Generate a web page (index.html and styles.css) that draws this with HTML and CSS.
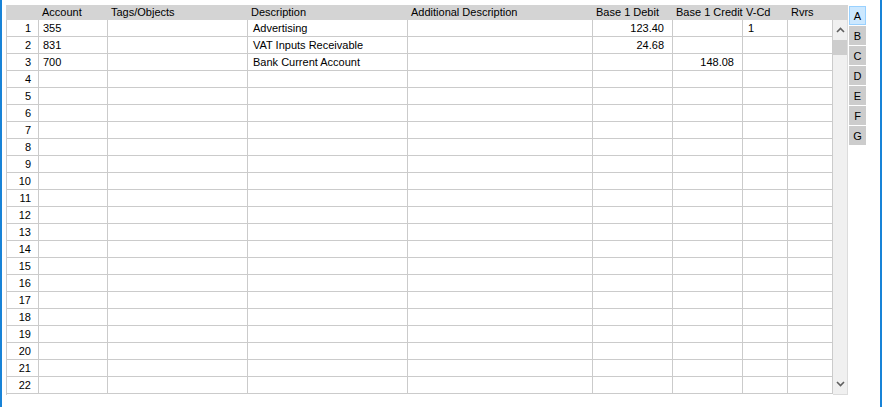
FILE: index.html
```html
<!DOCTYPE html>
<html>
<head>
<meta charset="utf-8">
<link rel="stylesheet" href="styles.css">
</head>
<body>
<div class="frame">
  <div class="table-area">
    <div class="header">
      <div class="hc"></div>
      <div class="hc">Account</div>
      <div class="hc">Tags/Objects</div>
      <div class="hc">Description</div>
      <div class="hc">Additional Description</div>
      <div class="hc">Base 1 Debit</div>
      <div class="hc">Base 1 Credit</div>
      <div class="hc">V-Cd</div>
      <div class="hc">Rvrs</div>
    </div>
    <div class="body">
      <div class="grid">
        <div class="row"><div class="c num">1</div><div class="c">355</div><div class="c"></div><div class="c desc">Advertising</div><div class="c"></div><div class="c amt">123.40</div><div class="c amt"></div><div class="c vcd">1</div><div class="c"></div></div>
        <div class="row"><div class="c num">2</div><div class="c">831</div><div class="c"></div><div class="c desc">VAT Inputs Receivable</div><div class="c"></div><div class="c amt">24.68</div><div class="c amt"></div><div class="c vcd"></div><div class="c"></div></div>
        <div class="row"><div class="c num">3</div><div class="c">700</div><div class="c"></div><div class="c desc">Bank Current Account</div><div class="c"></div><div class="c amt"></div><div class="c amt">148.08</div><div class="c vcd"></div><div class="c"></div></div>
        <div class="row"><div class="c num">4</div><div class="c"></div><div class="c"></div><div class="c"></div><div class="c"></div><div class="c"></div><div class="c"></div><div class="c"></div><div class="c"></div></div>
        <div class="row"><div class="c num">5</div><div class="c"></div><div class="c"></div><div class="c"></div><div class="c"></div><div class="c"></div><div class="c"></div><div class="c"></div><div class="c"></div></div>
        <div class="row"><div class="c num">6</div><div class="c"></div><div class="c"></div><div class="c"></div><div class="c"></div><div class="c"></div><div class="c"></div><div class="c"></div><div class="c"></div></div>
        <div class="row"><div class="c num">7</div><div class="c"></div><div class="c"></div><div class="c"></div><div class="c"></div><div class="c"></div><div class="c"></div><div class="c"></div><div class="c"></div></div>
        <div class="row"><div class="c num">8</div><div class="c"></div><div class="c"></div><div class="c"></div><div class="c"></div><div class="c"></div><div class="c"></div><div class="c"></div><div class="c"></div></div>
        <div class="row"><div class="c num">9</div><div class="c"></div><div class="c"></div><div class="c"></div><div class="c"></div><div class="c"></div><div class="c"></div><div class="c"></div><div class="c"></div></div>
        <div class="row"><div class="c num">10</div><div class="c"></div><div class="c"></div><div class="c"></div><div class="c"></div><div class="c"></div><div class="c"></div><div class="c"></div><div class="c"></div></div>
        <div class="row"><div class="c num">11</div><div class="c"></div><div class="c"></div><div class="c"></div><div class="c"></div><div class="c"></div><div class="c"></div><div class="c"></div><div class="c"></div></div>
        <div class="row"><div class="c num">12</div><div class="c"></div><div class="c"></div><div class="c"></div><div class="c"></div><div class="c"></div><div class="c"></div><div class="c"></div><div class="c"></div></div>
        <div class="row"><div class="c num">13</div><div class="c"></div><div class="c"></div><div class="c"></div><div class="c"></div><div class="c"></div><div class="c"></div><div class="c"></div><div class="c"></div></div>
        <div class="row"><div class="c num">14</div><div class="c"></div><div class="c"></div><div class="c"></div><div class="c"></div><div class="c"></div><div class="c"></div><div class="c"></div><div class="c"></div></div>
        <div class="row"><div class="c num">15</div><div class="c"></div><div class="c"></div><div class="c"></div><div class="c"></div><div class="c"></div><div class="c"></div><div class="c"></div><div class="c"></div></div>
        <div class="row"><div class="c num">16</div><div class="c"></div><div class="c"></div><div class="c"></div><div class="c"></div><div class="c"></div><div class="c"></div><div class="c"></div><div class="c"></div></div>
        <div class="row"><div class="c num">17</div><div class="c"></div><div class="c"></div><div class="c"></div><div class="c"></div><div class="c"></div><div class="c"></div><div class="c"></div><div class="c"></div></div>
        <div class="row"><div class="c num">18</div><div class="c"></div><div class="c"></div><div class="c"></div><div class="c"></div><div class="c"></div><div class="c"></div><div class="c"></div><div class="c"></div></div>
        <div class="row"><div class="c num">19</div><div class="c"></div><div class="c"></div><div class="c"></div><div class="c"></div><div class="c"></div><div class="c"></div><div class="c"></div><div class="c"></div></div>
        <div class="row"><div class="c num">20</div><div class="c"></div><div class="c"></div><div class="c"></div><div class="c"></div><div class="c"></div><div class="c"></div><div class="c"></div><div class="c"></div></div>
        <div class="row"><div class="c num">21</div><div class="c"></div><div class="c"></div><div class="c"></div><div class="c"></div><div class="c"></div><div class="c"></div><div class="c"></div><div class="c"></div></div>
        <div class="row"><div class="c num">22</div><div class="c"></div><div class="c"></div><div class="c"></div><div class="c"></div><div class="c"></div><div class="c"></div><div class="c"></div><div class="c"></div></div>
      </div>
      <div class="scrollbar">
        <div class="arrow">
          <svg width="9" height="6" viewBox="0 0 9 6"><path d="M1 5 L4.5 1.5 L8 5" fill="none" stroke="#606060" stroke-width="1.6"/></svg>
        </div>
        <div class="thumb"></div>
        <div class="track"></div>
        <div class="arrow">
          <svg width="9" height="6" viewBox="0 0 9 6"><path d="M1 1 L4.5 4.5 L8 1" fill="none" stroke="#606060" stroke-width="1.6"/></svg>
        </div>
      </div>
    </div>
  </div>
  <div class="tabs">
    <div class="tab active">A</div>
    <div class="tab">B</div>
    <div class="tab">C</div>
    <div class="tab">D</div>
    <div class="tab">E</div>
    <div class="tab">F</div>
    <div class="tab">G</div>
  </div>
</div>
</body>
</html>
```
FILE: styles.css
```css
html, body {
  margin: 0;
  padding: 0;
  background: #ffffff;
}
body {
  font-family: "Liberation Sans", Arial, sans-serif;
  font-size: 11px;
  color: #000000;
}
.frame {
  box-sizing: border-box;
  width: 882px;
  height: 407px;
  border-left: 2px solid #1883d7;
  border-right: 2px solid #1883d7;
  padding: 5px 0 0 4px;
  display: flex;
  align-items: flex-start;
}
.table-area {
  width: 842px;
  display: flex;
  flex-direction: column;
}
.header {
  height: 15px;
  background: #d4d4d4;
  display: grid;
  grid-template-columns: 33px 69px 140px 160px 185px 80px 70px 45px 45px 15px;
  align-items: center;
  line-height: 15px;
}
.hc {
  padding-left: 3px;
  white-space: nowrap;
  overflow: hidden;
}
.body {
  display: flex;
}
.grid {
  width: 827px;
  box-sizing: border-box;
  border-left: 1px solid #cbcbcb;
}
.row {
  display: grid;
  grid-template-columns: 32px 69px 140px 160px 185px 80px 70px 45px 45px;
  height: 17px;
}
.c {
  box-sizing: border-box;
  border-right: 1px solid #cbcbcb;
  border-bottom: 1px solid #cbcbcb;
  height: 17px;
  line-height: 16px;
  padding-left: 4px;
  white-space: nowrap;
  overflow: hidden;
}
.c.num {
  text-align: right;
  padding-left: 0;
  padding-right: 7px;
}
.c.desc {
  padding-left: 5px;
}
.c.amt {
  text-align: right;
  padding-left: 0;
  padding-right: 8px;
}
.c.vcd {
  padding-left: 5px;
}
.scrollbar {
  width: 15px;
  height: 374px;
  background: #f0f0f0;
  border-right: 1px solid #dcdcdc;
  border-bottom: 1px solid #dcdcdc;
  box-sizing: content-box;
  display: flex;
  flex-direction: column;
}
.arrow {
  height: 20px;
  display: flex;
  align-items: center;
  justify-content: center;
}
.thumb {
  height: 15px;
  background: #cdcdcd;
}
.track {
  flex: 1;
}
.tabs {
  margin-left: 1px;
  margin-top: 1px;
  display: flex;
  flex-direction: column;
  gap: 1px;
}
.tab {
  box-sizing: border-box;
  width: 17px;
  height: 19px;
  background: #cccccc;
  display: flex;
  align-items: center;
  justify-content: center;
  font-size: 11px;
}
.tab.active {
  background: #cce8ff;
  border: 1px solid #99d1ff;
}
```
